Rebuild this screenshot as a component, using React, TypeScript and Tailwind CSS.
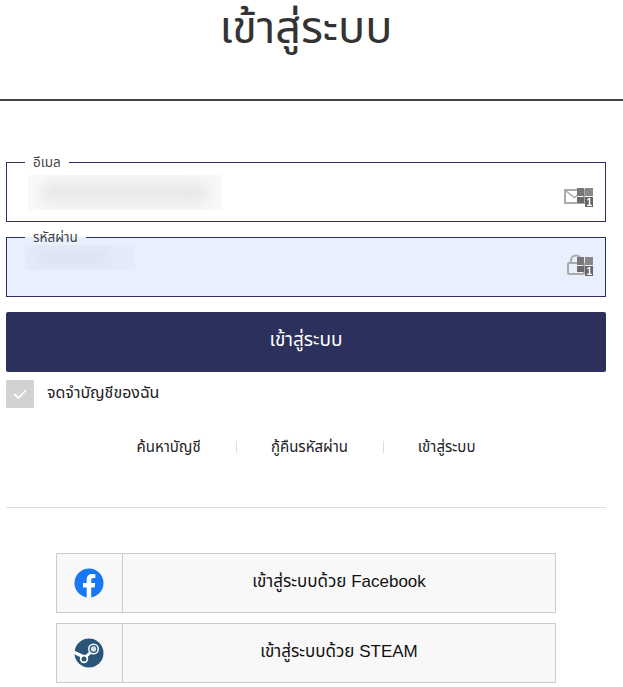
const F = '[font-family:"Liberation_Sans","Noto_Sans_Thai","Noto_Sans","DejaVu_Sans",sans-serif]';

function Badge() {
  return (
    <g>
      <rect x="13" y="0" width="7" height="8" fill="#777" />
      <rect x="21" y="0" width="8" height="8" fill="#888" />
      <rect x="13" y="9" width="7" height="6" fill="#6a6a6a" />
      <rect x="21" y="9" width="8" height="10" fill="#666" />
      <text x="22.5" y="18" fontSize="10" fontWeight="700" fill="#fff" fontFamily="Liberation Sans">1</text>
    </g>
  );
}

function MailIcon() {
  return (
    <svg width="29" height="19" viewBox="0 0 29 19" className="shrink-0 blur-[0.4px]">
      <rect x="1" y="2" width="19" height="13" fill="none" stroke="#aaa" strokeWidth="2" />
      <path d="M2 3l8.5 6.5L19 3" fill="none" stroke="#aaa" strokeWidth="1.5" />
      <Badge />
    </svg>
  );
}

function LockIcon() {
  return (
    <svg width="26" height="22" viewBox="0 0 26 22" className="shrink-0 blur-[0.4px]">
      <path d="M4 9V6.5a5 5 0 0 1 10 0V9" fill="none" stroke="#aaa" strokeWidth="2" />
      <rect x="1" y="9" width="16" height="11" rx="1" fill="none" stroke="#aaa" strokeWidth="2" />
      <g transform="translate(-3 3)"><Badge /></g>
    </svg>
  );
}

function Blur({ className }: { className: string }) {
  return <div className={`rounded-full blur-[7px] ${className}`} />;
}

function Social({ label, icon }: { label: string; icon: React.ReactNode }) {
  return (
    <div className="flex h-[60px] w-[500px] border border-[#cccccc] bg-[#f8f8f8]">
      <div className="flex w-[66px] shrink-0 items-center justify-center border-r border-[#cccccc] pr-[2px]">{icon}</div>
      <div className="flex flex-1 items-center justify-center pb-[3px] text-[17px] text-[#111]">{label}</div>
    </div>
  );
}

export default function App() {
  return (
    <div className={`h-[687px] w-[623px] overflow-hidden bg-white ${F}`}>
      <div className="h-[101px] border-b-2 border-[#444] pr-[11px] text-center text-[45px] leading-[56px] text-[#333]">เข้าสู่ระบบ</div>
      <div className="pl-[6px] pt-[54px]">
        <div className="w-[600px]">
          <fieldset className="h-[67px] min-w-0 border border-[#2b3060] bg-white pl-[21px] pr-[12px]">
            <legend className="-ml-[3px] px-2 text-[13.5px] leading-[15px] text-[#444]">อีเมล</legend>
            <div className="flex items-start justify-between pt-[5px]">
              <div className="h-[35px] w-[194px] overflow-hidden bg-[#f9f9f9]">
                <Blur className="ml-[12px] mt-[7px] h-[22px] w-[170px] bg-[#e8e8e8]" />
              </div>
              <div className="mt-[13px]"><MailIcon /></div>
            </div>
          </fieldset>
          <fieldset className="mt-[8px] h-[67px] min-w-0 border border-[#2b3060] bg-[#e8f0fe] pl-[18px] pr-[12px]">
            <legend className="px-2 text-[13.5px] leading-[15px] text-[#444]">รหัสผ่าน</legend>
            <div className="flex items-start justify-between">
              <div className="h-[25px] w-[110px] overflow-hidden bg-[#e5ecf9]">
                <Blur className="ml-[10px] mt-[6px] h-[15px] w-[75px] bg-[#dae2f0]" />
              </div>
              <div className="mt-[9px]"><LockIcon /></div>
            </div>
          </fieldset>
          <button className="mt-[15px] flex h-[60px] w-full items-center justify-center rounded-[2px] bg-[#2b305c] pb-[3px] text-[19px] text-white">เข้าสู่ระบบ</button>
          <div className="mt-[8px] flex items-center gap-[13px]">
            <div className="flex h-[28px] w-[28px] items-center justify-center bg-[#d2d2d2]">
              <svg width="14" height="12" viewBox="0 0 14 12"><path d="M1 6l4.5 4L13 2" fill="none" stroke="#fff" strokeWidth="1.7" /></svg>
            </div>
            <span className="pb-[3px] text-[16px] text-[#222]">จดจำบัญชีของฉัน</span>
          </div>
          <div className="mt-[26px] flex items-center justify-center text-[15px] leading-[26px] text-[#222]">
            <span className="w-[99px]">ค้นหาบัญชี</span>
            <span className="h-[12px] w-px bg-[#ddd]" />
            <span className="w-[146px] text-center">กู้คืนรหัสผ่าน</span>
            <span className="h-[12px] w-px bg-[#ddd]" />
            <span className="w-[92px] text-right">เข้าสู่ระบบ</span>
          </div>
          <div className="mt-[47px] border-t border-[#dddddd]" />
          <div className="mt-[45px] flex flex-col items-center gap-[10px]">
            <Social
              label="เข้าสู่ระบบด้วย Facebook"
              icon={
                <svg width="30" height="30" viewBox="0 0 30 30">
                  <circle cx="15" cy="15" r="14.5" fill="#1877f2" />
                  <path d="M12.7 29.7V19.4H9v-4.4h3.7v-3.3c0-3.7 2.2-5.7 5.5-5.7 1.6 0 3.2.3 3.2.3V10h-1.8c-1.8 0-2.4 1.1-2.4 2.3V15h4l-.6 4.4h-3.4v10.3z" fill="#fff" />
                </svg>
              }
            />
            <Social
              label="เข้าสู่ระบบด้วย STEAM"
              icon={
                <svg width="30" height="30" viewBox="0 0 30 30">
                  <circle cx="15" cy="15" r="14.5" fill="#2a5578" />
                  <path d="M0 16l11 5.5 7-6.5-1.5-2.5-5.5 5-11-5z" fill="#fff" />
                  <circle cx="19.5" cy="11" r="5.5" fill="#fff" />
                  <circle cx="19.5" cy="11" r="4" fill="#2a5578" />
                  <circle cx="19.5" cy="11" r="2.7" fill="#d8e0e8" />
                  <circle cx="10" cy="21" r="4.2" fill="#fff" />
                  <circle cx="10" cy="21" r="2.5" fill="#2a5578" />
                </svg>
              }
            />
          </div>
        </div>
      </div>
    </div>
  );
}
